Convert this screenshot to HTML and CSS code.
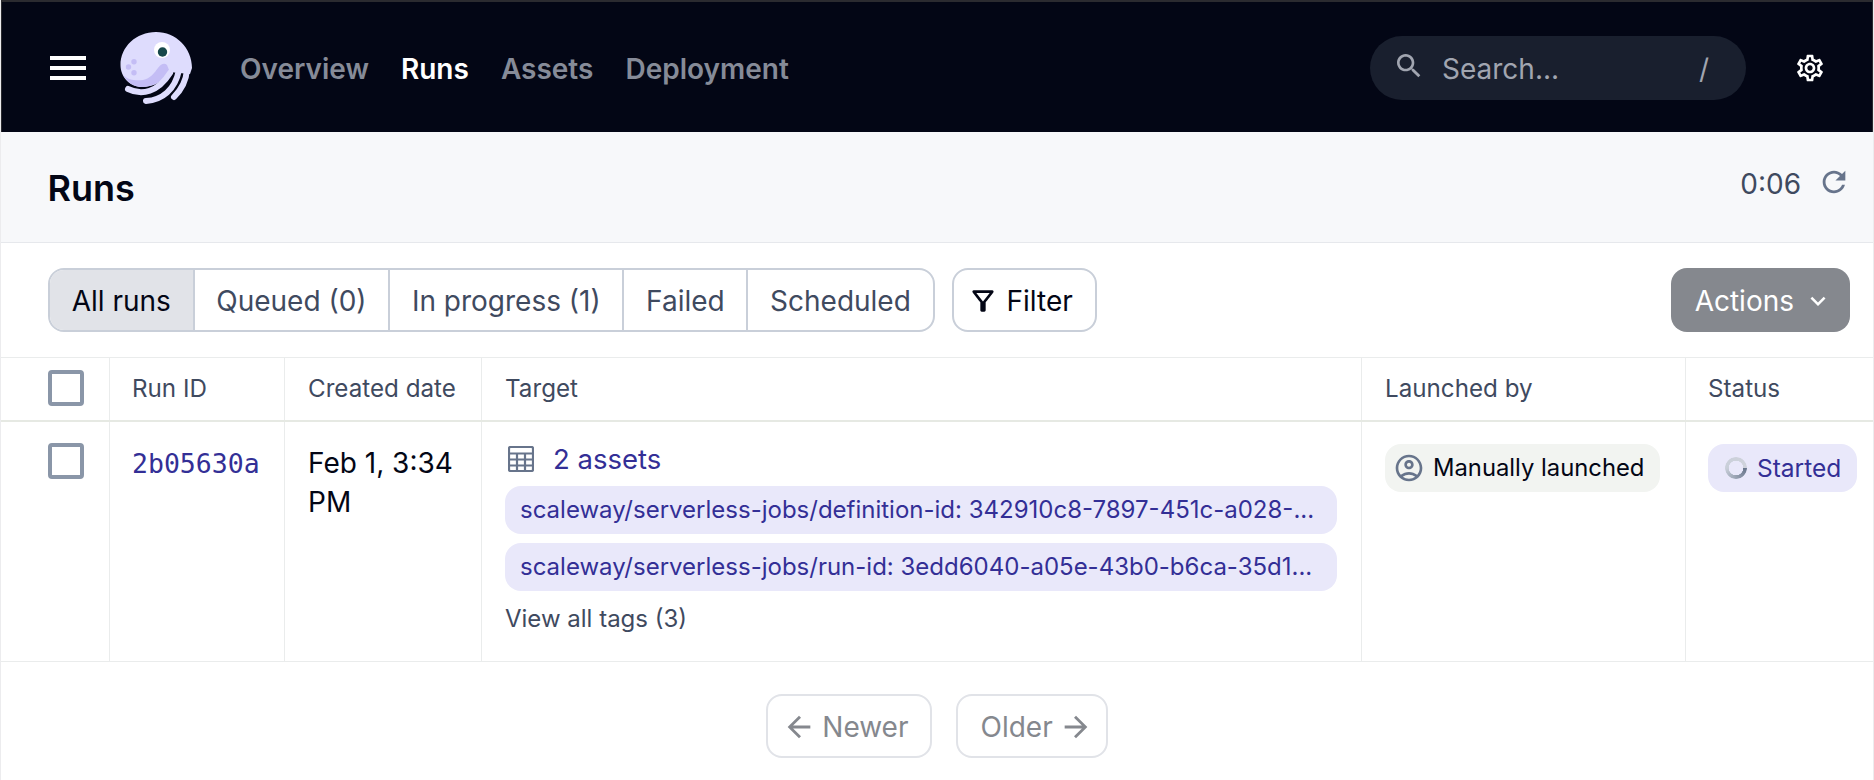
FILE: index.html
```html
<!DOCTYPE html>
<html lang="en">
<head>
  <meta charset="UTF-8">
  <title>Runs</title>
  <link rel="stylesheet" href="styles.css">
</head>
<body>
  <header class="topbar">
    <div class="burger"><span></span><span></span><span></span></div>
    <svg class="logo" viewBox="0 0 72 72">
      <path class="logo-head" d="M0.500 33C0.500 15 16 0 36 0C56 0 72 16 72 36L70 42L49 40C44 50 32 55 22 55C10 55 0.500 45 0.500 33Z"/>
      <path class="logo-shade" d="M3 43C8 48 16 49 23 48C30 47 35 40 38 36C40 33 44 30 47 33L49 38C44 50 32 55 22 55C13 55 7 50 3 43Z"/>
      <path class="logo-arm" d="M8 57C22 64 38 60 50 41"/>
      <path class="logo-arm" d="M26 69C42 68 55 58 59 38"/>
      <path class="logo-arm" d="M54 65C61 58 66 50 67 38"/>
      <circle class="logo-eye" cx="42" cy="18" r="8"/>
      <circle class="logo-pupil" cx="42.500" cy="20" r="4.700"/>
      <circle class="logo-dot" cx="14" cy="29.700" r="2.700"/>
      <circle class="logo-dot" cx="8.500" cy="35" r="2.700"/>
      <circle class="logo-dot" cx="14" cy="40.700" r="2.700"/>
    </svg>
    <nav class="nav">
      <a>Overview</a>
      <a class="active">Runs</a>
      <a>Assets</a>
      <a>Deployment</a>
    </nav>
    <div class="search">
      <svg class="icon" viewBox="0 0 24 24"><path d="M15.500 14h-.79l-.28-.27C15.410 12.590 16 11.110 16 9.500 16 5.910 13.090 3 9.500 3S3 5.910 3 9.500 5.910 16 9.500 16c1.610 0 3.090-.59 4.230-1.570l.27.28v.79l5 4.990L20.490 19l-4.990-5zm-6 0C7.010 14 5 11.990 5 9.500S7.010 5 9.500 5 14 7.010 14 9.500 11.990 14 9.500 14z"/></svg>
      <span class="search-text">Search...</span>
      <span class="search-key">/</span>
    </div>
    <svg class="icon gear" viewBox="0 0 24 24"><path d="M19.430 12.980c.04-.32.07-.64.07-.98 0-.34-.03-.66-.07-.98l2.110-1.650c.19-.15.24-.42.12-.64l-2-3.460c-.09-.16-.26-.25-.44-.25-.06 0-.12.01-.17.03l-2.490 1c-.52-.4-1.080-.73-1.690-.98l-.38-2.650C14.460 2.180 14.250 2 14 2h-4c-.25 0-.46.18-.49.42l-.38 2.650c-.61.25-1.170.59-1.690.98l-2.490-1c-.06-.02-.12-.03-.18-.03-.17 0-.34.09-.43.25l-2 3.460c-.13.22-.07.49.12.64l2.110 1.650c-.04.32-.07.65-.07.98 0 .33.03.66.07.98l-2.110 1.650c-.19.15-.24.42-.12.64l2 3.460c.09.16.26.25.44.25.06 0 .12-.01.17-.03l2.490-1c.52.4 1.080.73 1.690.98l.38 2.650c.03.24.24.42.49.42h4c.25 0 .46-.18.49-.42l.38-2.650c.61-.25 1.170-.59 1.690-.98l2.490 1c.06.02.12.03.18.03.17 0 .34-.09.43-.25l2-3.460c.12-.22.07-.49-.12-.64l-2.110-1.650zm-1.980-1.710c.04.31.05.52.05.73 0 .21-.02.43-.05.73l-.14 1.130.89.7 1.080.84-.7 1.210-1.270-.51-1.040-.42-.9.68c-.43.32-.84.56-1.250.73l-1.060.43-.16 1.130-.2 1.350h-1.400l-.19-1.350-.16-1.130-1.060-.43c-.43-.18-.83-.41-1.230-.71l-.91-.7-1.060.43-1.270.51-.7-1.210 1.080-.84.89-.7-.14-1.130c-.03-.31-.05-.54-.05-.74s.02-.43.05-.73l.14-1.130-.89-.7-1.080-.84.7-1.210 1.270.51 1.040.42.9-.68c.43-.32.84-.56 1.250-.73l1.060-.43.16-1.130.2-1.350h1.390l.19 1.350.16 1.130 1.060.43c.43.18.83.41 1.230.71l.91.7 1.060-.43 1.270-.51.7 1.210-1.070.85-.89.7.14 1.130zM12 8c-2.210 0-4 1.790-4 4s1.790 4 4 4 4-1.790 4-4-1.790-4-4-4zm0 6c-1.100 0-2-.9-2-2s.9-2 2-2 2 .9 2 2-.9 2-2 2z"/></svg>
  </header>

  <div class="page-head">
    <h1>Runs</h1>
    <div class="timer">
      <span>0:06</span>
      <svg class="icon" viewBox="0 0 24 24"><path d="M17.650 6.350C16.200 4.900 14.210 4 12 4c-4.420 0-7.990 3.580-7.990 8s3.570 8 7.990 8c3.730 0 6.840-2.550 7.730-6h-2.080c-.82 2.330-3.040 4-5.650 4-3.310 0-6-2.690-6-6s2.690-6 6-6c1.660 0 3.140.69 4.220 1.780L13 11h7V4l-2.350 2.350z"/></svg>
    </div>
  </div>

  <div class="toolbar">
    <div class="tabs">
      <a class="active">All runs</a>
      <a>Queued (0)</a>
      <a>In progress (1)</a>
      <a>Failed</a>
      <a>Scheduled</a>
    </div>
    <button class="btn filter">
      <svg class="icon" viewBox="0 0 24 24"><path d="M7 6h10l-5.010 6.300L7 6zM4.250 5.610C6.270 8.200 10 13 10 13v6c0 .55.45 1 1 1h2c.55 0 1-.45 1-1v-6s3.720-4.800 5.740-7.390C20.250 4.950 19.780 4 18.950 4H5.040C4.210 4 3.740 4.950 4.250 5.610z"/></svg>
      Filter
    </button>
    <button class="btn actions">
      Actions
      <svg class="icon" viewBox="0 0 24 24"><path d="M16.590 8.590L12 13.170 7.410 8.590 6 10l6 6 6-6z"/></svg>
    </button>
  </div>

  <table class="runs">
    <thead>
      <tr>
        <th class="col-check"><span class="checkbox"></span></th>
        <th class="col-id">Run ID</th>
        <th class="col-date">Created date</th>
        <th class="col-target">Target</th>
        <th class="col-user">Launched by</th>
        <th class="col-status">Status</th>
      </tr>
    </thead>
    <tbody>
      <tr>
        <td class="col-check"><span class="checkbox"></span></td>
        <td class="col-id"><a class="run-id">2b05630a</a></td>
        <td class="date">Feb 1, 3:34 PM</td>
        <td>
          <div class="assets">
            <svg class="table-icon" viewBox="0 0 26 26">
              <rect x="1" y="1" width="24" height="24" rx="1.500"/>
              <path d="M1 7.500H25M1 13.500H25M1 19.500H25M9 7.500V25M17 7.500V25"/>
            </svg>
            <a>2 assets</a>
          </div>
          <div class="tag-line">scaleway/serverless-jobs/definition-id: 342910c8-7897-451c-a028-...</div>
          <div class="tag-line">scaleway/serverless-jobs/run-id: 3edd6040-a05e-43b0-b6ca-35d1...</div>
          <a class="all-tags">View all tags (3)</a>
        </td>
        <td>
          <span class="pill user">
            <svg class="icon" viewBox="0 0 24 24"><path d="M12 2C6.480 2 2 6.480 2 12s4.480 10 10 10 10-4.480 10-10S17.520 2 12 2zM7.350 18.500C8.660 17.560 10.260 17 12 17s3.340.56 4.650 1.500c-1.310.94-2.910 1.500-4.650 1.500s-3.340-.56-4.650-1.500zm10.790-1.380C16.450 15.800 14.320 15 12 15s-4.450.8-6.140 2.120C4.700 15.730 4 13.950 4 12c0-4.420 3.580-8 8-8s8 3.580 8 8c0 1.950-.7 3.730-1.860 5.120z"/><path d="M12 6c-1.930 0-3.500 1.570-3.500 3.500S10.070 13 12 13s3.500-1.570 3.500-3.500S13.930 6 12 6zm0 5c-.83 0-1.500-.67-1.500-1.500S11.170 8 12 8s1.500.67 1.500 1.500S12.830 11 12 11z"/></svg>
            Manually launched
          </span>
        </td>
        <td class="col-status">
          <span class="pill status"><span class="spinner"></span>Started</span>
        </td>
      </tr>
    </tbody>
  </table>

  <div class="pager">
    <button class="btn page-btn newer">
      <svg class="icon" viewBox="0 0 24 24"><path d="M20 11H7.830l5.590-5.590L12 4l-8 8 8 8 1.410-1.410L7.830 13H20v-2z"/></svg>
      Newer
    </button>
    <button class="btn page-btn older">
      Older
      <svg class="icon" viewBox="0 0 24 24"><path d="M12 4l-1.410 1.410L16.170 11H4v2h12.170l-5.580 5.590L12 20l8-8z"/></svg>
    </button>
  </div>
</body>
</html>
```

FILE: styles.css
```css
* {
  box-sizing: border-box;
}

html, body {
  height: 100%;
}

body {
  margin: 0;
  background: #fff;
  color: #030615;
  font-family: Inter, "Liberation Sans", sans-serif;
  font-size: 28px;
  overflow: hidden;
  border-left: 1px solid #ececee;
  border-right: 1px solid #ececee;
}

.icon {
  display: block;
  fill: currentColor;
  flex: none;
}

/* top bar */
.topbar {
  display: flex;
  align-items: center;
  height: 132px;
  margin: 0 -1px;
  padding: 2px 0 0 50px;
  background: #030615;
  border-top: 2px solid #2b2b30;
  border-left: 2px solid #2b2b30;
  border-right: 2px solid #2b2b30;
}

.burger {
  display: flex;
  flex-direction: column;
  gap: 6px;
  width: 36px;
  margin-left: -2px;
}

.burger span {
  height: 4px;
  background: #fff;
}

.logo {
  width: 72px;
  height: 72px;
  margin-left: 34px;
  flex: none;
}

.logo-head {
  fill: #dedcfd;
}

.logo-eye {
  fill: #fff;
}

.logo-shade {
  fill: #c4bdf5;
}

.logo-arm {
  fill: none;
  stroke: #dedcfd;
  stroke-width: 6;
  stroke-linecap: round;
}

.logo-pupil {
  fill: #17484a;
}

.logo-dot {
  fill: #c4bdf5;
}

.nav {
  display: flex;
  gap: 32px;
  margin-top: 2px;
  margin-left: 48px;
  font-weight: 600;
  font-size: 28px;
  color: #868b98;
}

.nav .active {
  color: #fff;
}

.search {
  display: flex;
  align-items: center;
  width: 376px;
  height: 64px;
  margin-left: auto;
  padding: 0 37px 0 23px;
  border-radius: 32px;
  background: #191f2e;
  color: #a1a5b0;
}

.search .icon {
  width: 32px;
  height: 32px;
  margin-top: -4px;
}

.search-text {
  margin-left: 17px;
  margin-top: 2px;
  flex: 1;
}

.search-key {
  margin-top: 2px;
}

.gear {
  width: 32px;
  height: 32px;
  margin: 0 46px 0 48px;
  color: #fff;
}

/* page title */
.page-head {
  display: flex;
  align-items: center;
  justify-content: space-between;
  height: 111px;
  padding: 0 22px 0 46.500px;
  background: #f7f8fa;
  border-bottom: 1px solid #e6e8ec;
}

h1 {
  margin: 1px 0 0;
  font-size: 36px;
  font-weight: 600;
}

.timer {
  display: flex;
  align-items: center;
  gap: 16px;
  margin-top: -6px;
  color: #3f4a5f;
}

.timer .icon {
  width: 34px;
  height: 34px;
  color: #67748b;
  margin-top: -4px;
}

/* filters */
.toolbar {
  display: flex;
  align-items: center;
  height: 114px;
  padding: 0 23px 1px 47px;
}

.tabs {
  display: flex;
  height: 64px;
  border: 2px solid #c9cfd9;
  border-radius: 16px;
  overflow: hidden;
  font-size: 28px;
  color: #3f4a5f;
}

.tabs a {
  display: flex;
  align-items: center;
  padding: 2px 21.700px 0;
  border-left: 2px solid #c9cfd9;
}

.tabs a:first-child {
  border-left: none;
}

.tabs .active {
  background: #e1e3e8;
  color: #030615;
}

.btn {
  display: flex;
  align-items: center;
  height: 64px;
  padding-top: 2px;
  border: 2px solid #c9cfd9;
  border-radius: 16px;
  background: #fff;
  color: #030615;
  font-family: inherit;
  font-size: 28px;
}

.filter {
  gap: 8px;
  margin-left: 17px;
  padding: 2px 22px 0 13px;
}

.filter .icon {
  width: 32px;
  height: 32px;
}

.actions {
  gap: 9px;
  margin-left: auto;
  padding: 2px 17px 0 24px;
  border: none;
  background: #85888e;
  color: #fff;
}

.actions .icon {
  width: 30px;
  height: 30px;
}

/* table */
.runs {
  width: calc(100% + 2px);
  margin-left: -1px;
  border-collapse: collapse;
  table-layout: fixed;
}

.runs th, .runs td {
  padding: 0 0 0 23px;
  border: 1px solid #eaecec;
  border-right: none;
  text-align: left;
  vertical-align: top;
}

.runs th {
  height: 63px;
  padding-bottom: 1px;
  vertical-align: middle;
  font-weight: 400;
  font-size: 24.200px;
  color: #3f4a5f;
  border-bottom: 2px solid #e6e9e3;
}

.runs td {
  height: 241px;
  padding-top: 22px;
}

.runs .col-check {
  width: 109px;
  padding-left: 47px;
}

.runs th.col-check {
  vertical-align: middle;
  padding-bottom: 0;
}

.runs .col-id {
  width: 175px;
  padding-left: 22px;
}

.runs .col-status {
  padding-left: 22px;
}

.col-date {
  width: 197px;
}

.col-target {
  width: 880px;
}

.col-user {
  width: 324px;
}

.checkbox {
  display: block;
  width: 36px;
  height: 36px;
  margin-top: -1px;
  border: 4px solid #8a96a8;
  border-radius: 4px;
  background: #fff;
}

.run-id {
  font-family: "DejaVu Sans Mono", monospace;
  font-size: 26.500px;
  line-height: 40px;
  color: #332f96;
}

.date {
  font-size: 28px;
  line-height: 39.500px;
}

.assets {
  display: flex;
  align-items: center;
  gap: 19px;
  height: 30px;
  font-size: 27.500px;
  color: #332f96;
}

.table-icon {
  width: 26px;
  height: 26px;
  margin-left: 3px;
  fill: none;
  stroke: #67748b;
  stroke-width: 2.200;
}

.tag-line {
  height: 48px;
  margin: 9px 24px 0 0;
  padding: 0 15px;
  border-radius: 16px;
  background: #e9e8fa;
  color: #332f96;
  font-size: 24px;
  line-height: 47px;
  white-space: nowrap;
  overflow: hidden;
}

.assets + .tag-line {
  margin-top: 12px;
}

.all-tags {
  display: block;
  margin-top: 13px;
  font-size: 24px;
  color: #3f4a5f;
}

.pill {
  display: inline-flex;
  align-items: center;
  height: 48px;
  border-radius: 16px;
  font-size: 24px;
  white-space: nowrap;
}

.user {
  gap: 8px;
  padding: 0 16px 0 8px;
  background: #f2f4f1;
  color: #030615;
  font-size: 23.800px;
}

.user .icon {
  width: 32px;
  height: 32px;
  color: #67748b;
}

.status {
  gap: 10px;
  padding: 0 16px 0 17px;
  background: #e9e8fa;
  color: #332f96;
  font-size: 24.500px;
}

.spinner {
  width: 22px;
  height: 22px;
  border-radius: 50%;
  background: conic-gradient(from 90deg, #67748b, #c9cfd9 50%, #d0d3dc);
  -webkit-mask: radial-gradient(circle, transparent 7px, #000 7.500px);
  mask: radial-gradient(circle, transparent 7px, #000 7.500px);
}

/* pagination */
.pager {
  display: flex;
  justify-content: center;
  gap: 24px;
  margin-top: 32px;
}

.page-btn {
  border-color: #e1e3e8;
  color: #85888e;
}

.page-btn .icon {
  width: 34px;
  height: 34px;
}

.newer {
  gap: 6px;
  padding: 2px 22px 0 14px;
}

.older {
  gap: 6px;
  padding: 2px 13px 0 22px;
}
```
